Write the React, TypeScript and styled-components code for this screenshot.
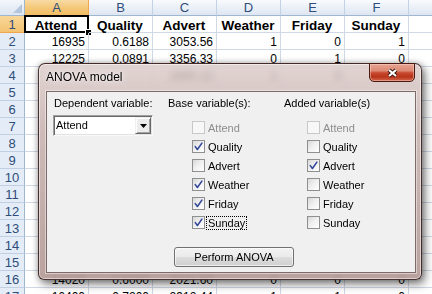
import React from "react";
import styled, { createGlobalStyle } from "styled-components";

const FONT = `"Liberation Sans", Arial, sans-serif`;

const GlobalStyle = createGlobalStyle`
  html, body { margin: 0; padding: 0; background: #ffffff; overflow: hidden; }
  #root { width: 432px; height: 294px; }
`;

const Screen = styled.div`
  position: relative;
  width: 432px;
  height: 294px;
  overflow: hidden;
  font-family: ${FONT};
  background: #fff;
`;

/* ---------- spreadsheet ---------- */

const Sheet = styled.div`
  display: grid;
  grid-template-columns: 25px repeat(7, 64px);
  grid-template-rows: 16px;
  grid-auto-rows: 17px;
`;

const Corner = styled.div`
  box-sizing: border-box;
  border-right: 1px solid #9eb6ce;
  border-bottom: 1px solid #9eb6ce;
  background: linear-gradient(#f3f6fb, #dce5f1);
  display: flex;
  align-items: flex-end;
  justify-content: flex-end;
  padding: 0 2px 2px 0;
`;

const CornerMark = styled.span`
  width: 9px;
  height: 9px;
  background: #b4c6dc;
  clip-path: polygon(100% 0, 100% 100%, 0 100%);
`;

const ColHead = styled.div<{ $sel?: boolean }>`
  box-sizing: border-box;
  border-right: 1px solid ${(p) => (p.$sel ? "#f2a74c" : "#c2d2e4")};
  border-bottom: 1px solid ${(p) => (p.$sel ? "#f29536" : "#9eb6ce")};
  background: ${(p) =>
    p.$sel
      ? "linear-gradient(#f9daa4, #f4c777 55%, #f1be66)"
      : "linear-gradient(#f9fbfd, #e9eff7 55%, #dee6f1)"};
  display: flex;
  align-items: center;
  justify-content: center;
  font-size: 13px;
  line-height: 15px;
  color: #2f4d7a;
`;

const RowHead = styled.div<{ $sel?: boolean }>`
  box-sizing: border-box;
  border-right: 1px solid ${(p) => (p.$sel ? "#f29536" : "#9eb6ce")};
  border-bottom: 1px solid ${(p) => (p.$sel ? "#f2a74c" : "#c0d0e2")};
  background: ${(p) => (p.$sel ? "linear-gradient(#f8d699, #f3c472)" : "#e4ecf7")};
  display: flex;
  align-items: center;
  justify-content: center;
  font-size: 13px;
  line-height: 15px;
  color: #2f4d7a;
`;

const Cell = styled.div<{ $bold?: boolean; $active?: boolean }>`
  position: relative;
  box-sizing: border-box;
  border-right: 1px solid #d0d7e5;
  border-bottom: 1px solid #d0d7e5;
  display: flex;
  align-items: flex-end;
  justify-content: ${(p) => (p.$bold ? "center" : "flex-end")};
  padding: 0 3px 0 2px;
  font-size: ${(p) => (p.$bold ? "13.5px" : "12px")};
  font-weight: ${(p) => (p.$bold ? 700 : 400)};
  line-height: ${(p) => (p.$bold ? "13px" : "14px")};
  color: #000;
  white-space: nowrap;
  ${(p) =>
    p.$active &&
    `
    &::before {
      content: "";
      position: absolute;
      top: -1px; left: -1px; right: -1px; bottom: -1px;
      border: 2px solid #000;
    }
    &::after {
      content: "";
      position: absolute;
      right: -4px; bottom: -4px;
      width: 5px; height: 5px;
      background: #000;
      border: 1px solid #fff;
    }
  `}
`;

/* the G header is off-screen in the picture, so it is left blank */
const columns = ["A", "B", "C", "D", "E", "F", ""];
const headers = ["Attend", "Quality", "Advert", "Weather", "Friday", "Sunday"];
/* rows 2..17; rows hidden behind the opaque dialog body are left empty */
const data: string[][] = [
  ["16935", "0.6188", "3053.56", "1", "0", "1"],
  ["12225", "0.0891", "3356.33", "0", "1", "0"],
  ["", "", "2890.12", "1", "0", "0"],
  ["", "", "", "", "", ""],
  ["", "", "", "", "", ""],
  ["", "", "", "", "", ""],
  ["", "", "", "", "", ""],
  ["", "", "", "", "", ""],
  ["", "", "", "", "", ""],
  ["", "", "", "", "", ""],
  ["", "", "", "", "", ""],
  ["", "", "", "", "", ""],
  ["", "", "", "", "", ""],
  ["", "", "", "", "", ""],
  ["14020", "0.6000", "2021.60", "0", "0", "0"],
  ["16400", "0.7200", "2912.44", "1", "1", "0"],
];

/* ---------- dialog ---------- */

const Dialog = styled.div`
  position: absolute;
  left: 38px;
  top: 63px;
  width: 384px;
  height: 217px;
  box-sizing: border-box;
  display: flex;
  flex-direction: column;
  padding: 0 5px 6px 7px;
  border: 1px solid rgba(48, 24, 22, 0.85);
  border-radius: 7px 7px 6px 6px;
  background: linear-gradient(
    180deg,
    rgba(218, 202, 199, 0.8) 0%,
    rgba(198, 176, 173, 0.85) 30%,
    rgba(178, 152, 148, 0.9) 100%
  );
  backdrop-filter: blur(3px);
  box-shadow: inset 0 0 0 1px rgba(255, 255, 255, 0.5), 3px 4px 10px rgba(0, 0, 0, 0.5),
    0 0 6px rgba(0, 0, 0, 0.25);
`;

const TitleBar = styled.div`
  height: 27px;
  flex: none;
  display: flex;
  align-items: flex-start;
  justify-content: space-between;
`;

const TitleText = styled.span`
  font-size: 12px;
  line-height: 27px;
  color: #000;
  text-shadow: 0 0 6px rgba(255, 255, 255, 0.9), 0 0 2px rgba(255, 255, 255, 0.7);
`;

const CloseButton = styled.div`
  width: 46px;
  height: 19px;
  box-sizing: border-box;
  margin: -1px 1px 0 0;
  border: 1px solid #4a1a12;
  border-radius: 0 0 5px 5px;
  background: linear-gradient(
    180deg,
    #e6a491 0%,
    #dc8a74 40%,
    #c8492e 52%,
    #b8341b 75%,
    #d2664a 100%
  );
  box-shadow: inset 0 0 0 1px rgba(255, 220, 210, 0.45);
  display: flex;
  align-items: center;
  justify-content: center;
`;

const Client = styled.div`
  flex: 1;
  box-sizing: border-box;
  background: #f0f0f0;
  border: 1px solid #7d6a68;
  box-shadow: 0 0 0 1px rgba(255, 255, 255, 0.45);
  padding: 4px 0 0 6px;
  font-size: 11px;
  color: #000;
  display: flex;
  flex-direction: column;
`;

const Columns = styled.div`
  display: grid;
  grid-template-columns: 115px 116px 1fr;
`;

const Column = styled.div`
  display: flex;
  flex-direction: column;
  align-items: flex-start;
`;

const Label = styled.span<{ $indent?: number }>`
  line-height: 14px;
  margin-left: ${(p) => p.$indent ?? 0}px;
`;

const Combo = styled.div`
  margin-top: 5px;
  width: 100px;
  height: 21px;
  box-sizing: border-box;
  display: flex;
  align-items: stretch;
  background: #fff;
  border: 1px solid;
  border-color: #a0a0a0 #f8f8f8 #f8f8f8 #a0a0a0;
  box-shadow: inset 1px 1px 0 #696969, inset -1px -1px 0 #e3e3e3;
  padding: 1px 1px 1px 2px;
`;

const ComboText = styled.span`
  flex: 1;
  line-height: 17px;
`;

const DropButton = styled.span`
  width: 16px;
  box-sizing: border-box;
  background: #ececec;
  border: 1px solid;
  border-color: #f0f0f0 #696969 #696969 #f0f0f0;
  box-shadow: inset 1px 1px 0 #fff, inset -1px -1px 0 #a0a0a0;
  display: flex;
  align-items: center;
  justify-content: center;
`;

const CheckList = styled.div<{ $indent: number }>`
  margin-top: 8px;
  padding-left: ${(p) => p.$indent}px;
  display: flex;
  flex-direction: column;
`;

const CheckRow = styled.div`
  height: 19px;
  display: flex;
  align-items: center;
`;

const Box = styled.span<{ $disabled?: boolean }>`
  flex: none;
  width: 13px;
  height: 13px;
  box-sizing: border-box;
  border: 1px solid ${(p) => (p.$disabled ? "#c8c8c8" : "#8e8f8f")};
  background: ${(p) =>
    p.$disabled
      ? "#f7f7f7"
      : "linear-gradient(135deg, #d8d8d8 0%, #efefef 45%, #ffffff 100%)"};
  display: flex;
  align-items: center;
  justify-content: center;
`;

const CheckLabel = styled.span<{ $disabled?: boolean; $focus?: boolean }>`
  margin-left: 1px;
  padding: 0 1px;
  line-height: 12px;
  border: 1px dotted ${(p) => (p.$focus ? "#000" : "transparent")};
  color: ${(p) => (p.$disabled ? "#8d8d8d" : "#000")};
`;

const ButtonRow = styled.div`
  margin-top: 15px;
  display: flex;
  justify-content: center;
`;

const PushButton = styled.button`
  width: 120px;
  height: 20px;
  box-sizing: border-box;
  padding: 0;
  border: 1px solid #707070;
  border-radius: 3px;
  background: linear-gradient(180deg, #f2f2f2 0%, #ebebeb 48%, #dddddd 52%, #cfcfcf 100%);
  box-shadow: inset 0 0 0 1px rgba(255, 255, 255, 0.65);
  font-family: ${FONT};
  font-size: 11px;
  color: #000;
`;

type Item = { label: string; checked?: boolean; disabled?: boolean; focus?: boolean };

const baseVars: Item[] = [
  { label: "Attend", disabled: true },
  { label: "Quality", checked: true },
  { label: "Advert" },
  { label: "Weather", checked: true },
  { label: "Friday", checked: true },
  { label: "Sunday", checked: true, focus: true },
];

const addedVars: Item[] = [
  { label: "Attend", disabled: true },
  { label: "Quality" },
  { label: "Advert", checked: true },
  { label: "Weather" },
  { label: "Friday" },
  { label: "Sunday" },
];

const CheckMark = () => (
  <svg width="9" height="9" viewBox="0 0 9 9">
    <path
      d="M1.3 4.6 L3.4 7.5 L7.9 1.1"
      fill="none"
      stroke="#34489a"
      strokeWidth="1.6"
      strokeLinecap="round"
      strokeLinejoin="round"
    />
  </svg>
);

const CheckGroup = ({ items, indent }: { items: Item[]; indent: number }) => (
  <CheckList $indent={indent}>
    {items.map((it) => (
      <CheckRow key={it.label}>
        <Box $disabled={it.disabled}>{it.checked && <CheckMark />}</Box>
        <CheckLabel $disabled={it.disabled} $focus={it.focus}>
          {it.label}
        </CheckLabel>
      </CheckRow>
    ))}
  </CheckList>
);

export default function App() {
  return (
    <Screen>
      <GlobalStyle />
      <Sheet>
        <Corner>
          <CornerMark />
        </Corner>
        {columns.map((c, i) => (
          <ColHead key={i} $sel={i === 0}>
            {c}
          </ColHead>
        ))}
        <RowHead $sel>1</RowHead>
        {headers.map((h, i) => (
          <Cell key={h} $bold $active={i === 0}>
            {h}
          </Cell>
        ))}
        <Cell />
        {data.map((row, r) => (
          <React.Fragment key={r}>
            <RowHead>{r + 2}</RowHead>
            {row.map((v, c) => (
              <Cell key={c}>{v}</Cell>
            ))}
            <Cell />
          </React.Fragment>
        ))}
      </Sheet>

      <Dialog>
        <TitleBar>
          <TitleText>ANOVA model</TitleText>
          <CloseButton>
            <svg width="13" height="10" viewBox="0 0 13 10">
              <path d="M3 2 L10 8 M10 2 L3 8" stroke="#3b1510" strokeWidth="4.2" />
              <path d="M3 2 L10 8 M10 2 L3 8" stroke="#ffffff" strokeWidth="2.2" />
            </svg>
          </CloseButton>
        </TitleBar>
        <Client>
          <Columns>
            <Column>
              <Label $indent={1}>Dependent variable:</Label>
              <Combo>
                <ComboText>Attend</ComboText>
                <DropButton>
                  <svg width="7" height="4" viewBox="0 0 7 4">
                    <path d="M0 0 H7 L3.5 4 Z" fill="#000" />
                  </svg>
                </DropButton>
              </Combo>
            </Column>
            <Column>
              <Label>Base variable(s):</Label>
              <CheckGroup items={baseVars} indent={24} />
            </Column>
            <Column>
              <Label>Added variable(s)</Label>
              <CheckGroup items={addedVars} indent={23} />
            </Column>
          </Columns>
          <ButtonRow>
            <PushButton>Perform ANOVA</PushButton>
          </ButtonRow>
        </Client>
      </Dialog>
    </Screen>
  );
}
